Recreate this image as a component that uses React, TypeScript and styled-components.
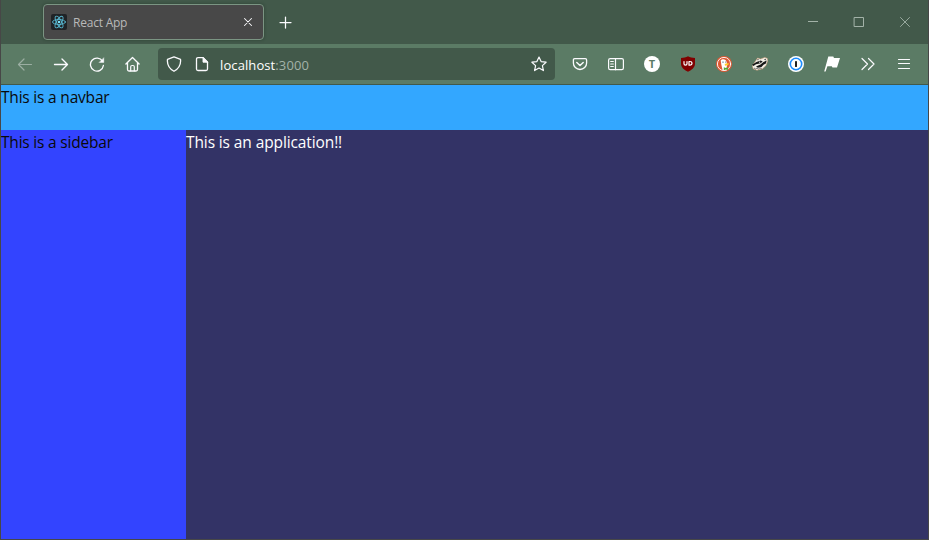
import React from 'react';
import styled, { createGlobalStyle } from 'styled-components';

const GlobalStyle = createGlobalStyle`
  * { box-sizing: border-box; }
  body { margin: 0; overflow: hidden; }
`;

const Window = styled.div`
  width: 929px;
  height: 540px;
  display: flex;
  flex-direction: column;
  border: 1px solid #474747;
  border-top: 0;
  background: #333366;
  font-family: 'Open Sans', 'Noto Sans', sans-serif;
`;

const TitleBar = styled.div`
  height: 44px;
  flex: none;
  display: flex;
  align-items: flex-start;
  padding-left: 42px;
  background: #42594a;
`;

const Tab = styled.div`
  width: 221px;
  height: 36px;
  margin-top: 4px;
  display: flex;
  align-items: center;
  padding: 0 7px;
  border: 1px solid #7b9583;
  border-radius: 4px;
  background: #484848;
  box-shadow: 0 0 3px rgba(20, 35, 25, 0.45);
`;

const TabTitle = styled.span`
  flex: 1;
  margin: 2px 0 0 6px;
  font-size: 12px;
  line-height: 16px;
  letter-spacing: -0.22px;
  color: #b9b9b9;
`;

const TabClose = styled.span`
  width: 16px;
  height: 16px;
  display: flex;
`;

const NewTab = styled.span`
  width: 36px;
  height: 44px;
  margin-left: 4px;
  display: flex;
  align-items: center;
  justify-content: center;
`;

const WindowControls = styled.div`
  margin-left: auto;
  display: flex;
`;

const WindowButton = styled.span`
  width: 46px;
  height: 44px;
  display: flex;
  align-items: center;
  justify-content: center;
`;

const Toolbar = styled.div`
  height: 41px;
  flex: none;
  display: flex;
  align-items: center;
  padding: 0 6px;
  background: #5b7b65;
  border-bottom: 1px solid #42594a;
`;

const ToolButton = styled.span<{ $dim?: boolean }>`
  width: 36px;
  height: 40px;
  flex: none;
  display: flex;
  align-items: center;
  justify-content: center;
  opacity: ${(p) => (p.$dim ? 0.4 : 1)};
`;

const AddressBar = styled.div`
  width: 397px;
  height: 32px;
  margin: 0 7px;
  display: flex;
  align-items: center;
  padding: 0 8px;
  border-radius: 4px;
  background: #42594a;
`;

const PageIcon = styled.span`
  display: flex;
  margin-left: 12px;
`;

const Address = styled.span`
  flex: 1;
  margin: 1px 0 0 10px;
  font-size: 13px;
  line-height: 18px;
  letter-spacing: 0.1px;
  color: #fff;
`;

const Port = styled.span`
  color: #a3b2a8;
`;

const Navbar = styled.div`
  height: 45px;
  flex: none;
  background: #33a7ff;
`;

const Body = styled.div`
  flex: 1;
  display: flex;
`;

const Sidebar = styled.div`
  width: 185px;
  background: #3344ff;
`;

const Content = styled.div`
  flex: 1;
  background: #333366;
`;

const PageText = styled.div<{ $light?: boolean; $spacing: number }>`
  padding-top: 2px;
  font-size: 15.5px;
  line-height: 21px;
  letter-spacing: ${(p) => p.$spacing}px;
  white-space: nowrap;
  color: ${(p) => (p.$light ? '#fff' : '#0a0a0a')};
`;

const Icon = styled.svg.attrs({ width: 16, height: 16, viewBox: '0 0 16 16' })`
  display: block;
  flex: none;
  fill: none;
  stroke: #fbfbfe;
  stroke-width: 1.2;
  stroke-linecap: round;
  stroke-linejoin: round;
`;

const BadgeText = styled.text`
  font-family: 'Open Sans', sans-serif;
  font-weight: 700;
  stroke: none;
  text-anchor: middle;
`;

const ReactLogo = () => (
  <Icon>
    <rect width="16" height="16" rx="2" fill="#202326" stroke="none" />
    <g stroke="#58b9d2" strokeWidth="0.9">
      <ellipse cx="8" cy="8" rx="6.5" ry="2.5" />
      <ellipse cx="8" cy="8" rx="6.5" ry="2.5" transform="rotate(60 8 8)" />
      <ellipse cx="8" cy="8" rx="6.5" ry="2.5" transform="rotate(120 8 8)" />
    </g>
    <circle cx="8" cy="8" r="1.3" fill="#7be3fb" stroke="none" />
  </Icon>
);

const UblockIcon = () => (
  <Icon>
    <path d="M8 .3C6 1.500 3.600 2 1 2v5.500c0 4 3 6.300 7 8.200 4-1.900 7-4.200 7-8.200V2C12.400 2 10 1.500 8 .3z" fill="#800000" stroke="none" />
    <path d="M4 5.500v2.300q0 1.400 1.500 1.400T7 7.800V5.500M9 5.500v3.700h.8q2.200 0 2.200-1.850t-2.200-1.850z" strokeWidth="1.200" stroke="#fff" />
  </Icon>
);

const DuckIcon = () => (
  <Icon>
    <circle cx="8" cy="8" r="8" fill="#de5833" stroke="none" />
    <circle cx="8" cy="8" r="6.600" stroke="#fff" strokeWidth=".9" />
    <path d="M4.700 4.500C6 2.500 10.200 2.700 10.700 6.200l.5 3-.7 2.300.4 2.500q-2.300.8-4.400-.3L5.400 9z" fill="#fff" stroke="none" />
    <path d="M8.700 8q2-1.200 4.500-.5-.3 1.900-4.200 2.200z" fill="#ffc928" stroke="none" />
    <path d="m7.800 11.300 2.100.8 2.200-.8v2.700l-2.200-.5-2.100.8z" fill="#55a938" stroke="none" />
    <circle cx="7" cy="6.100" r=".65" fill="#294760" stroke="none" />
    <circle cx="9.700" cy="5.900" r=".5" fill="#294760" stroke="none" />
  </Icon>
);

const BadgerIcon = () => (
  <Icon>
    <path d="M.3 10 2.500 6.500 4.300 4l1.200-2 3 1 4.200-1.500 2.500.8.5 2.500-1.700 4.700-3.500 3.300-5.500 1.400-3.500-1.200z" fill="#f2efe6" stroke="#d99a75" strokeWidth=".5" />
    <path d="m5 3.500 1.800-.4-.8 1.400zM12 3.300l2-.5-.5 1.600z" fill="#393634" stroke="none" />
    <path d="M0 8.700 4.500 6l4.200-1.600 2 1L8.500 7.200 4 8.300 1.500 10zM4 10.500l4.500-2 3-2.500 3.200-1.500-.8 3-2.400 1.300-2 2.200-3.600.8z" fill="#171717" stroke="none" />
    <path d="m2.300 12.200 1.400.8 1.200-.8 1.300.9 1.600-1 1.500.3" stroke="#444" strokeWidth=".7" />
    <circle cx="7.700" cy="6.200" r=".6" fill="#fff" stroke="none" />
  </Icon>
);

const OnePasswordIcon = () => (
  <Icon>
    <circle cx="8" cy="8" r="8" fill="#fff" stroke="none" />
    <circle cx="8" cy="8" r="5.700" stroke="#1a8cff" strokeWidth="1.600" />
    <rect x="7" y="5" width="2" height="6" rx=".4" fill="#222" stroke="none" />
  </Icon>
);

export default function App() {
  return (
    <Window>
      <GlobalStyle />
      <TitleBar>
        <Tab>
          <ReactLogo />
          <TabTitle>React App</TabTitle>
          <TabClose>
            <Icon><path d="m4.500 4.500 7 7m0-7-7 7" strokeWidth="1.050" /></Icon>
          </TabClose>
        </Tab>
        <NewTab>
          <Icon><path d="M2 8.500h11M7.500 3v11" strokeWidth="1.250" /></Icon>
        </NewTab>
        <WindowControls>
          <WindowButton>
            <Icon><path d="M3 7.500h10" stroke="#a3b2a8" strokeWidth="1" strokeLinecap="butt" /></Icon>
          </WindowButton>
          <WindowButton>
            <Icon><path d="M3.500 3.500h9v9h-9z" stroke="#a3b2a8" strokeWidth="1" strokeLinejoin="miter" /></Icon>
          </WindowButton>
          <WindowButton>
            <Icon><path d="m3.500 3.500 9 9m0-9-9 9" stroke="#a3b2a8" strokeWidth=".9" /></Icon>
          </WindowButton>
        </WindowControls>
      </TitleBar>

      <Toolbar>
        <ToolButton $dim>
          <Icon><path d="M14.500 8.500h-13M7 3 1.500 8.500 7 14" /></Icon>
        </ToolButton>
        <ToolButton>
          <Icon><path d="M1.500 8.500h13M9 3l5.500 5.500L9 14" strokeWidth="1.350" /></Icon>
        </ToolButton>
        <ToolButton>
          <Icon>
            <path d="M13.500 5.200A6.500 6.500 0 1 0 14.400 9.500" strokeWidth="1.350" />
            <path d="M14.800 2v4.500h-4.500z" fill="#fbfbfe" strokeWidth=".4" />
          </Icon>
        </ToolButton>
        <ToolButton>
          <Icon>
            <path d="M.9 8 7.500 1.500 14.100 8M2.500 7v6.500q0 1.500 1.500 1.500h7q1.500 0 1.500-1.500V7" strokeWidth="1.300" />
            <path d="M5.700 14.800v-4q0-1.300 1.300-1.300h1q1.300 0 1.300 1.300v4" />
          </Icon>
        </ToolButton>

        <AddressBar>
          <Icon><path d="M8 .8 14.500 3.300c.6 5-1.800 9.300-6.500 12C3.300 12.600.9 8.300 1.500 3.300z" strokeWidth="1.300" /></Icon>
          <PageIcon>
            <Icon>
              <path d="M9.200 1.700H4q-1.500 0-1.500 1.500v9.800q0 1.500 1.500 1.500h8q1.500 0 1.500-1.500V6.200z" strokeWidth="1.300" />
              <path d="M9 1.700v4.500h4.500z" fill="#fbfbfe" strokeWidth=".9" />
            </Icon>
          </PageIcon>
          <Address>localhost<Port>:3000</Port></Address>
          <Icon><path d="m8 1 2.100 4.600 5 .6-3.700 3.400 1 5L8 12.100l-4.400 2.500 1-5L.9 6.200l5-.6z" /></Icon>
        </AddressBar>

        <ToolButton>
          <Icon>
            <path d="M2.700 2.600h10.600q1.300 0 1.300 1.300v3a6.600 6.600 0 0 1-13.200 0v-3q0-1.300 1.300-1.300z" strokeWidth="1.300" />
            <path d="m4.800 6.500 3.200 3 3.200-3" strokeWidth="1.500" />
          </Icon>
        </ToolButton>
        <ToolButton>
          <Icon>
            <rect x=".6" y="2.600" width="14.800" height="11" rx="1.600" />
            <path d="M7.500 2.700v11M2.700 5.500h2.600M2.700 8h2.600M2.700 10.500h2.600" />
          </Icon>
        </ToolButton>
        <ToolButton>
          <Icon>
            <circle cx="8" cy="8" r="8" fill="#fff" stroke="none" />
            <BadgeText x="8" y="12" fontSize="11" fill="#5b7b65">T</BadgeText>
          </Icon>
        </ToolButton>
        <ToolButton><UblockIcon /></ToolButton>
        <ToolButton><DuckIcon /></ToolButton>
        <ToolButton><BadgerIcon /></ToolButton>
        <ToolButton><OnePasswordIcon /></ToolButton>
        <ToolButton>
          <Icon>
            <path d="M4.300 .5h5l.7 1.400h6l-3 9.500H8.500l-.7-1.200H3.400L1.600 15.400H.2z" fill="#fff" stroke="none" />
          </Icon>
        </ToolButton>
        <ToolButton>
          <Icon><path d="m2 2.500 5.500 5.500L2 13.500m6.500-11L14 8l-5.500 5.500" /></Icon>
        </ToolButton>
        <ToolButton>
          <Icon><path d="M2.500 3.500h11M2.500 7.500h11M2.500 12.500h11" strokeWidth="1.200" /></Icon>
        </ToolButton>
      </Toolbar>

      <Navbar>
        <PageText $spacing={-0.2}>This is a navbar</PageText>
      </Navbar>
      <Body>
        <Sidebar>
          <PageText $spacing={-0.2}>This is a sidebar</PageText>
        </Sidebar>
        <Content>
          <PageText $light $spacing={-0.11}>This is an application!!</PageText>
        </Content>
      </Body>
    </Window>
  );
}
